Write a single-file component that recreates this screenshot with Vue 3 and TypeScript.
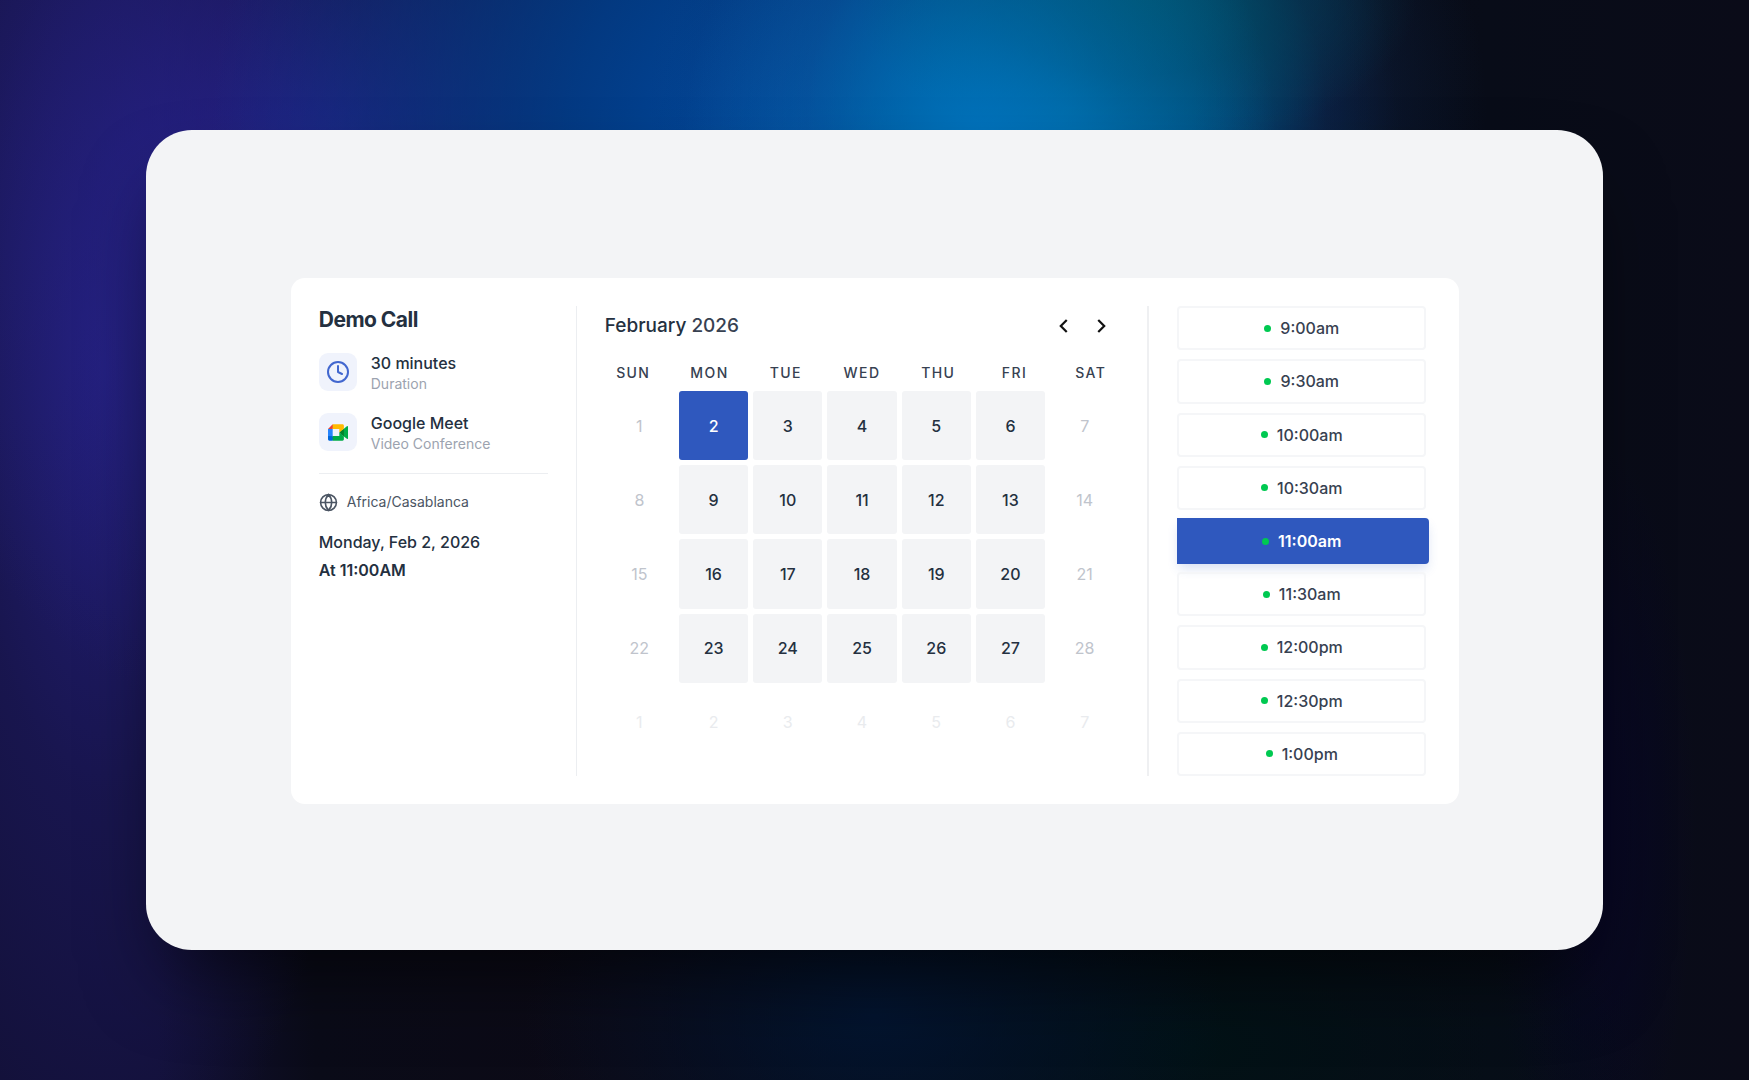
<script setup lang="ts">
import { ref } from 'vue'

interface Day {
  key: string
  label: number
  state: 'open' | 'closed' | 'outside'
}

const weekdays = ['Sun', 'Mon', 'Tue', 'Wed', 'Thu', 'Fri', 'Sat']
const slots = ['9:00am', '9:30am', '10:00am', '10:30am', '11:00am', '11:30am', '12:00pm', '12:30pm', '1:00pm']

const days: Day[] = Array.from({ length: 35 }, (_, i) => {
  const column = i % 7
  if (i >= 28) return { key: `mar-${i - 27}`, label: i - 27, state: 'outside' }
  return { key: `feb-${i + 1}`, label: i + 1, state: column === 0 || column === 6 ? 'closed' : 'open' }
})

const selectedDay = ref('feb-2')
const selectedSlot = ref('11:00am')
</script>

<template>
  <main class="backdrop">
    <div class="stage">
      <section class="card">
        <aside class="summary">
          <h1>Demo Call</h1>
          <div class="fact">
            <span class="tile">
              <svg width="24" height="24" viewBox="0 0 24 24" fill="none" stroke="#4267cf" stroke-width="2" stroke-linecap="round" stroke-linejoin="round">
                <circle cx="12" cy="12" r="10" />
                <path d="M12 6v6l4 2" />
              </svg>
            </span>
            <div class="fact-text">
              <p class="fact-name">30 minutes</p>
              <p class="fact-kind">Duration</p>
            </div>
          </div>
          <div class="fact">
            <span class="tile">
              <svg width="20" height="17" viewBox="0 0 87.5 72">
                <path fill="#00832d" d="M49.5 36l8.53 9.75 11.47 7.33 2-17.02-2-16.64-11.69 6.44z" />
                <path fill="#0066da" d="M0 51.5V66c0 3.315 2.685 6 6 6h14.5l3-10.96-3-9.54-9.95-3z" />
                <path fill="#e94235" d="M20.5 0L0 20.5l10.55 3 9.95-3 2.95-9.41z" />
                <path fill="#2684fc" d="M20.5 20.5H0v31h20.5z" />
                <path fill="#00ac47" d="M82.6 8.68L69.5 19.42v33.66l13.16 10.79c1.97 1.54 4.85.135 4.85-2.37V11c0-2.535-2.945-3.925-4.91-2.32zM49.5 36v15.5h-29V72h43c3.315 0 6-2.685 6-6V53.08z" />
                <path fill="#ffba00" d="M63.5 0h-43v20.5h29V36l20-16.57V6c0-3.315-2.685-6-6-6z" />
              </svg>
            </span>
            <div class="fact-text">
              <p class="fact-name">Google Meet</p>
              <p class="fact-kind">Video Conference</p>
            </div>
          </div>
          <hr />
          <p class="zone">
            <svg width="19" height="19" viewBox="0 0 24 24" fill="none" stroke="currentColor" stroke-width="2" stroke-linecap="round">
              <circle cx="12" cy="12" r="10" />
              <path d="M2 12h20M12 2c5.400 5.600 5.400 14.400 0 20M12 2c-5.400 5.600-5.400 14.400 0 20" />
            </svg>
            Africa/Casablanca
          </p>
          <p class="chosen">Monday, Feb 2, 2026</p>
          <p class="chosen chosen-time">At 11:00AM</p>
        </aside>

        <section class="calendar">
          <header class="month">
            <h2>February <span>2026</span></h2>
            <nav class="pager" aria-label="Month">
              <button type="button" aria-label="Previous month">
                <svg width="22" height="22" viewBox="0 0 24 24" fill="none" stroke="currentColor" stroke-width="2.400"><path d="M15 5.500L8.500 12l6.500 6.500" /></svg>
              </button>
              <button type="button" aria-label="Next month">
                <svg width="22" height="22" viewBox="0 0 24 24" fill="none" stroke="currentColor" stroke-width="2.400"><path d="M9 5.500l6.500 6.500L9 18.500" /></svg>
              </button>
            </nav>
          </header>
          <div class="weekdays">
            <span v-for="name in weekdays" :key="name">{{ name }}</span>
          </div>
          <div class="days">
            <button
              v-for="day in days"
              :key="day.key"
              type="button"
              class="day"
              :class="[day.state, { selected: day.key === selectedDay }]"
              :disabled="day.state !== 'open'"
              @click="selectedDay = day.key"
            >
              {{ day.label }}
            </button>
          </div>
        </section>

        <section class="slots" aria-label="Available times">
          <button
            v-for="slot in slots"
            :key="slot"
            type="button"
            class="slot"
            :class="{ picked: slot === selectedSlot }"
            @click="selectedSlot = slot"
          >
            <i class="dot"></i>{{ slot }}
          </button>
        </section>
      </section>
    </div>
  </main>
</template>

<style>
body {
  margin: 0;
  background: #080a18;
}
</style>

<style scoped>
* {
  box-sizing: border-box;
}

h1,
h2,
p {
  margin: 0;
}

button {
  margin: 0;
  padding: 0;
  border: 0;
  background: none;
  color: inherit;
  font: inherit;
  cursor: pointer;
}

.backdrop {
  display: flex;
  align-items: center;
  justify-content: center;
  min-height: 100vh;
  font-family: Inter, "Liberation Sans", sans-serif;
  color: #243040;
  background:
    radial-gradient(ellipse 17% 32% at 56% 14%, rgba(0, 118, 196, 0.85) 0%, rgba(0, 112, 188, 0.4) 50%, rgba(0, 100, 170, 0) 100%),
    radial-gradient(ellipse 16% 14% at 65% 0%, rgba(0, 82, 104, 0.9) 0%, rgba(0, 72, 92, 0.5) 50%, rgba(0, 60, 80, 0) 100%),
    radial-gradient(ellipse 24% 36% at 61% 10%, rgba(0, 112, 164, 0.95) 0%, rgba(0, 100, 150, 0.75) 30%, rgba(20, 56, 110, 0.35) 62%, rgba(14, 18, 50, 0) 100%),
    radial-gradient(ellipse 34% 60% at 46% 14%, #004ea8 0%, rgba(0, 64, 142, 0.85) 40%, rgba(16, 44, 130, 0) 100%),
    radial-gradient(ellipse 26% 50% at 18% 18%, rgba(42, 36, 156, 0.85) 0%, rgba(38, 34, 138, 0.45) 50%, rgba(30, 28, 110, 0) 100%),
    radial-gradient(ellipse 16% 80% at 6% 34%, rgba(38, 34, 134, 0.85) 0%, rgba(32, 28, 108, 0.45) 50%, rgba(24, 20, 80, 0) 100%),
    radial-gradient(ellipse 20% 22% at 50% 94%, #03142f 0%, rgba(3, 18, 46, 0) 100%),
    radial-gradient(ellipse 26% 20% at 68% 97%, #021216 0%, rgba(2, 18, 22, 0) 100%),
    radial-gradient(ellipse 6% 36% at 91% 76%, #070626 0%, rgba(8, 8, 38, 0) 100%),
    linear-gradient(90deg, #121036 0%, #121036 9%, #0a0b18 18%, #0c0a16 36%, #060812 60%, #080c18 85%, #0a0b18 100%);
}

.stage {
  display: flex;
  align-items: center;
  justify-content: center;
  width: calc(100% * 10 / 12);
  min-height: 820px;
  padding: 34px 144px 32px 145px;
  border-radius: 46px;
  background: #f3f4f6;
  box-shadow: 0 42px 80px -20px rgba(0, 0, 0, 0.6);
}

.card {
  display: flex;
  width: 100%;
  padding: 28px 33px 28px 28px;
  border-radius: 14px;
  background: #fff;
}

.summary {
  flex: 0 0 258px;
  padding-right: 28px;
  border-right: 1px solid #eceef1;
}

h1 {
  margin-bottom: 19px;
  font-size: 21px;
  line-height: 28px;
  font-weight: 700;
  letter-spacing: -0.025em;
}

.fact {
  display: flex;
  gap: 14px;
  margin-bottom: 18px;
}

.tile {
  display: flex;
  flex: none;
  align-items: center;
  justify-content: center;
  width: 38px;
  height: 38px;
  border-radius: 9px;
  background: #f0f3fc;
}

.fact-name {
  font-size: 16px;
  line-height: 20px;
  font-weight: 500;
}

.fact-kind {
  font-size: 14px;
  line-height: 22px;
  color: #9ca3af;
}

hr {
  height: 1px;
  margin: 0 0 18px;
  border: 0;
  background: #eceef1;
}

.zone {
  display: flex;
  align-items: center;
  gap: 9px;
  margin-bottom: 16px;
  font-size: 14px;
  line-height: 20px;
  color: #4b5563;
}

.chosen {
  font-size: 16px;
  line-height: 28px;
  font-weight: 500;
}

.chosen-time {
  font-weight: 600;
}

.calendar {
  flex: 1;
  min-width: 0;
  padding: 0 28px;
  border-right: 2px solid #eff0f2;
}

.month {
  display: flex;
  align-items: center;
  justify-content: space-between;
  height: 39px;
  margin-bottom: 18px;
}

h2 {
  font-size: 19px;
  line-height: 28px;
  font-weight: 500;
}

h2 span {
  color: #374151;
}

.pager {
  display: flex;
  color: #111;
}

.pager button {
  display: flex;
  align-items: center;
  justify-content: center;
  width: 37px;
  height: 37px;
}

.weekdays {
  display: flex;
  justify-content: space-between;
  margin-bottom: 8px;
}

.weekdays span {
  width: 57px;
  text-align: center;
  font-size: 14px;
  line-height: 20px;
  font-weight: 500;
  letter-spacing: 0.1em;
  text-transform: uppercase;
  color: #374151;
}

.days {
  display: grid;
  grid-template-columns: repeat(7, 1fr);
  gap: 5px;
}

.day {
  aspect-ratio: 1;
  border-radius: 3px;
  font-size: 16px;
}

.open {
  background: #f3f4f6;
  font-weight: 500;
}

.closed {
  color: #c0c4cc;
}

.outside {
  color: #e9ebee;
}

.selected {
  background: #2f58be;
  color: #fff;
}

.slots {
  display: flex;
  flex-direction: column;
  flex: 0 0 277px;
  gap: 9px;
  min-height: 470px;
  padding-left: 28px;
}

.slot {
  display: flex;
  flex: 1;
  align-items: center;
  justify-content: center;
  gap: 9px;
  border: 2px solid #f5f6f8;
  border-radius: 4px;
  font-size: 16px;
  font-weight: 500;
  color: #374151;
}

.dot {
  width: 7px;
  height: 7px;
  border-radius: 50%;
  background: #00c951;
}

.picked {
  flex: 0 0 46px;
  margin: -1px -3px -1px 0;
  padding-right: 3px;
  border-color: #2f58be;
  border-radius: 0 4px 4px 0;
  background: #2f58be;
  color: #fff;
  font-weight: 600;
  box-shadow: 0 6px 12px -2px rgba(47, 88, 190, 0.2);
}
</style>
